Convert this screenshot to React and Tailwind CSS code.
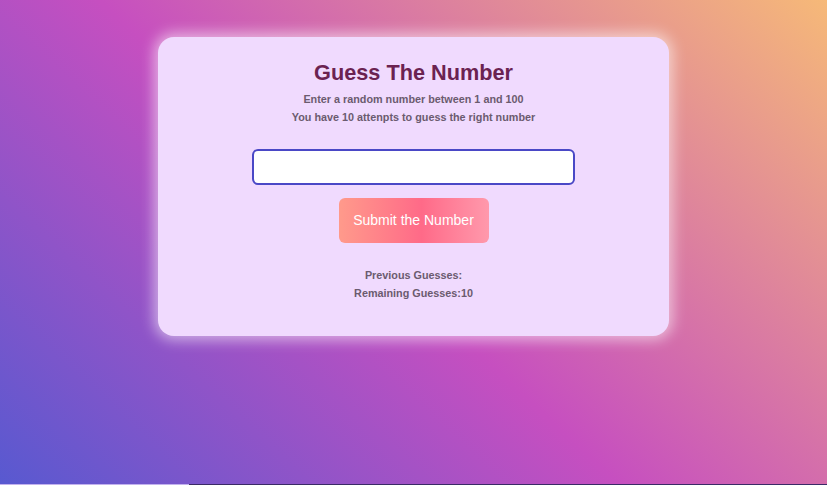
import React from "react";

export default function App() {
  return (
    <div className="w-[827px] h-[485px] overflow-hidden relative" style={{ fontFamily: '"Liberation Sans", Arial, sans-serif' }}>
      <div className="w-full h-[484px] bg-[linear-gradient(43deg,#5859d0_0%,#c64fc0_46%,#f6b978_100%)] pt-[37px] flex justify-center">
        <div className="w-[511px] h-[299px] bg-[#f0dafe] rounded-[16px] shadow-[0_0_14px_4px_rgba(255,255,255,0.55)] pt-[22px] pb-[34px] flex flex-col items-center">
          <h1 className="text-[21.7px] leading-[28px] font-bold text-[#6b2251]">Guess The Number</h1>
          <p className="mt-[3px] text-[10.8px] leading-[18px] font-bold text-[#6b5b6f]">Enter a random number between 1 and 100</p>
          <p className="text-[10.8px] leading-[18px] font-bold text-[#6b5b6f]">You have 10 attenpts to guess the right number</p>
          <input className="mt-[23px] w-[323px] h-[36px] bg-white border-2 border-[#4a48c6] rounded-[6px] outline-none" />
          <button className="mt-[13px] w-[150px] h-[45px] rounded-[6px] text-white text-[14px] bg-[linear-gradient(90deg,#FF9A8B_0%,#FF6A88_55%,#FF99AC_100%)]">
            Submit the Number
          </button>
          <p className="mt-[23px] text-[10.8px] leading-[18px] font-bold text-[#6b5b6f]">Previous Guesses:</p>
          <p className="text-[10.8px] leading-[18px] font-bold text-[#6b5b6f]">Remaining Guesses:10</p>
        </div>
      </div>
      <div className="flex h-[1px]">
        <div className="w-[189px] bg-[#c2b2ee]" />
        <div className="flex-1 bg-[#3a2a66]" />
      </div>
    </div>
  );
}
